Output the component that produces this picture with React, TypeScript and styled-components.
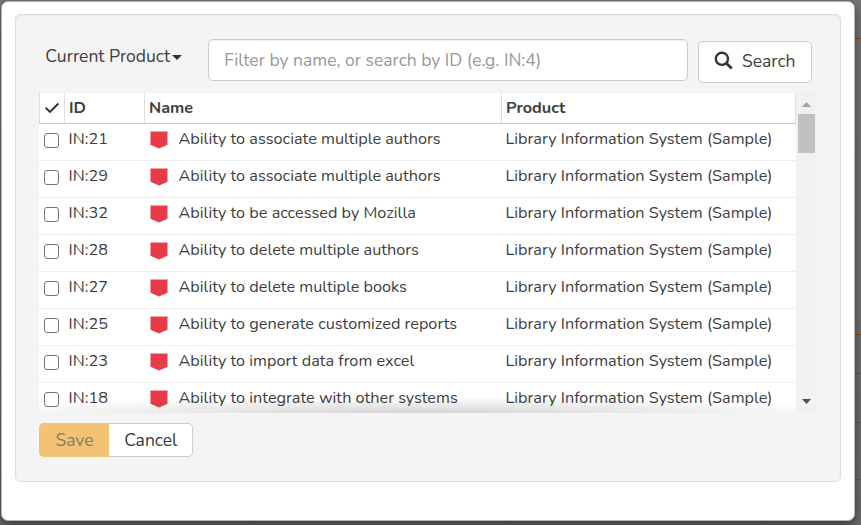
import React from "react";
import styled, { createGlobalStyle, css } from "styled-components";

const GlobalStyle = createGlobalStyle`
  *, *::before, *::after { box-sizing: border-box; }
  html, body { margin: 0; height: 100%; overflow: hidden; }
  body {
    background: #777;
    color: #3e3e3e;
    font-family: Nunito, Lato, "Open Sans", sans-serif;
    font-size: 16.25px;
  }
  button, input { font: inherit; color: inherit; margin: 0; }
`;

const Backdrop = styled.div`
  position: relative;
  width: 861px;
  height: 525px;
  padding: 1px 6px 4px 1px;
  overflow: hidden;
  background: linear-gradient(#777, #737373 60%, #6c6c6c);
`;

const PageRule = styled.div<{ $top: number; $accent?: boolean }>`
  position: absolute;
  left: 0;
  right: 0;
  top: ${(p) => p.$top}px;
  height: 1px;
  background: ${(p) => (p.$accent ? "#8a4714" : "#5c5c5c")};
`;

const Modal = styled.section`
  position: relative;
  height: 520px;
  padding: 12px 13px 38px;
  background: #fff;
  border: 1px solid #b4b4b4;
  border-radius: 7px;
  box-shadow: 0 4px 12px rgba(0, 0, 0, 0.5);
`;

const Well = styled.div`
  height: 468px;
  padding: 24px 23px;
  background: #f4f4f4;
  border: 1px solid #dedede;
  border-radius: 5px;
  box-shadow: inset 0 1px 2px rgba(0, 0, 0, 0.06);
`;

const Toolbar = styled.div`
  display: flex;
  align-items: flex-start;
  height: 54px;
`;

const Dropdown = styled.button`
  display: flex;
  align-items: center;
  width: 169px;
  height: 34px;
  padding: 0 0 0 6.3px;
  border: 0;
  background: none;
  font-size: 17.5px;
`;

const Caret = styled.span`
  margin: 3px 0 0 1.5px;
  border: 5px solid transparent;
  border-top-color: #333;
  border-bottom: 0;
`;

const control = css`
  height: 42px;
  background: #fff;
  border: 1px solid #ccc;
  border-radius: 5px;
  font-size: 17.5px;
`;

const FilterInput = styled.input`
  ${control}
  width: 480px;
  padding: 0 15px 1px 15.3px;
  box-shadow: inset 0 1px 1px rgba(0, 0, 0, 0.075);
  &::placeholder { color: #999; opacity: 1; }
`;

const SearchButton = styled.button`
  ${control}
  display: flex;
  align-items: center;
  gap: 8px;
  width: 114px;
  margin: 2px 0 0 10px;
  padding: 0 15px 2px;
`;

const TableFrame = styled.div`
  display: flex;
  width: 778px;
  height: 320px;
`;

const Viewport = styled.div`
  position: relative;
  width: 757px;
  height: 320px;
  overflow: hidden;
  background: #fff;
`;

const BottomFade = styled.div`
  position: absolute;
  inset: auto 0 0;
  height: 16px;
  background: radial-gradient(ellipse 62% 100% at 50% 100%, rgba(0, 0, 0, 0.17), transparent);
`;

const columns = css`
  display: grid;
  grid-template-columns: 25px 80px 357px 295px;
`;

const HeadRow = styled.div`
  ${columns}
  height: 31px;
  border-bottom: 1px solid #f3c944;
  font-weight: 700;
`;

const HeadCell = styled.div<{ $last?: boolean }>`
  display: flex;
  align-items: center;
  padding: 0 4px 1px;
  border-left: 1px solid #ddd;
  border-right: ${(p) => (p.$last ? "1px solid #ddd" : "0")};
`;

const Row = styled.div`
  ${columns}
  height: 37px;
  border-bottom: 1px solid #ececec;
`;

const Cell = styled.div`
  display: flex;
  align-items: flex-start;
  padding: 4px 0 0 4.5px;
  line-height: 22px;
  white-space: nowrap;
`;

const Check = styled.input`
  appearance: none;
  width: 15px;
  height: 15px;
  margin: 5px 0 0 0.2px !important;
  background: #fff;
  border: 1px solid #767676;
  border-radius: 3px;
`;

const Shield = styled.svg`
  width: 18px;
  height: 18px;
  margin: 3px 10.5px 0 1.5px;
`;

const Scrollbar = styled.div`
  display: flex;
  flex-direction: column;
  align-items: center;
  width: 21px;
  height: 320px;
  background: #f1f1f1;
`;

const ScrollThumb = styled.div`
  width: 17px;
  height: 39px;
  background: #c1c1c1;
`;

const ScrollArrow = styled.svg<{ $down?: boolean }>`
  width: 9px;
  height: 5px;
  margin: ${(p) => (p.$down ? "auto 0 9px" : "9px 0 7px")};
`;

const Actions = styled.div`
  display: flex;
  margin-top: 10px;
`;

const ActionButton = styled.button<{ $primary?: boolean }>`
  width: ${(p) => (p.$primary ? 70 : 84)}px;
  height: 34px;
  padding: 0 0 0 ${(p) => (p.$primary ? 1 : 0.4)}px;
  border: ${(p) => (p.$primary ? "0" : "1px solid #ccc")};
  border-left-width: 0;
  border-radius: ${(p) => (p.$primary ? "5px 0 0 5px" : "0 5px 5px 0")};
  background: ${(p) => (p.$primary ? "#f3c274" : "#fff")};
  color: ${(p) => (p.$primary ? "#8a7c66" : "#3a3a3a")};
  font-size: 17.5px;
`;

const items = [
  ["IN:21", "Ability to associate multiple authors"],
  ["IN:29", "Ability to associate multiple authors"],
  ["IN:32", "Ability to be accessed by Mozilla"],
  ["IN:28", "Ability to delete multiple authors"],
  ["IN:27", "Ability to delete multiple books"],
  ["IN:25", "Ability to generate customized reports"],
  ["IN:23", "Ability to import data from excel"],
  ["IN:18", "Ability to integrate with other systems"],
];

export default function App() {
  return (
    <>
      <GlobalStyle />
      <Backdrop>
        <PageRule $top={38} $accent />
        <PageRule $top={334} $accent />
        <PageRule $top={373} />
        <PageRule $top={422} />
        <PageRule $top={479} />
        <Modal>
          <Well>
            <Toolbar>
              <Dropdown>
                Current Product
                <Caret />
              </Dropdown>
              <FilterInput placeholder="Filter by name, or search by ID (e.g. IN:4)" />
              <SearchButton>
                <svg width="20" height="20" viewBox="0 0 20 20" fill="none" stroke="#333" aria-hidden="true">
                  <circle cx="7.9" cy="7.8" r="6.1" strokeWidth="2.4" />
                  <path d="M12.4 12.3 17.7 17.6" strokeWidth="2.8" />
                </svg>
                Search
              </SearchButton>
            </Toolbar>
            <TableFrame>
              <Viewport>
                <HeadRow>
                  <HeadCell>
                    <svg width="16" height="14" viewBox="0 0 16 14" fill="none" stroke="#333" strokeWidth="1.9" aria-hidden="true">
                      <path d="M1.7 6.8 6 11 14.4 2.5" />
                    </svg>
                  </HeadCell>
                  <HeadCell>ID</HeadCell>
                  <HeadCell>Name</HeadCell>
                  <HeadCell $last>Product</HeadCell>
                </HeadRow>
                {items.map(([id, name]) => (
                  <Row key={id}>
                    <Cell>
                      <Check type="checkbox" aria-label={id} />
                    </Cell>
                    <Cell>{id}</Cell>
                    <Cell>
                      <Shield viewBox="0 0 18 18" aria-hidden="true">
                        <path d="M.5.5h17v13.3L9 17.6.5 13.8z" fill="#e83b49" />
                        <path d="M.5.5h17" stroke="#f4a3aa" />
                      </Shield>
                      {name}
                    </Cell>
                    <Cell>Library Information System (Sample)</Cell>
                  </Row>
                ))}
                <BottomFade />
              </Viewport>
              <Scrollbar>
                <ScrollArrow viewBox="0 0 9 5">
                  <path d="M0 5 4.5 0 9 5z" fill="#a3a3a3" />
                </ScrollArrow>
                <ScrollThumb />
                <ScrollArrow $down viewBox="0 0 9 5">
                  <path d="M0 0h9L4.5 5z" fill="#505050" />
                </ScrollArrow>
              </Scrollbar>
            </TableFrame>
            <Actions>
              <ActionButton $primary>Save</ActionButton>
              <ActionButton>Cancel</ActionButton>
            </Actions>
          </Well>
        </Modal>
      </Backdrop>
    </>
  );
}
